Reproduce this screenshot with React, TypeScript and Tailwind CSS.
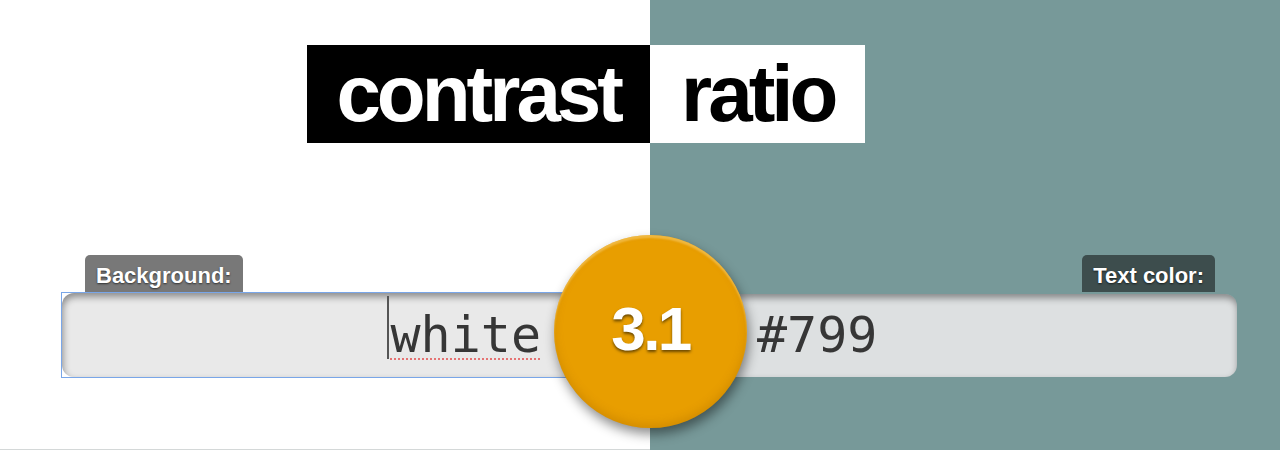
import React from "react";

const sans = "font-['Liberation_Sans',Arial,sans-serif]";
const mono = "font-['DejaVu_Sans_Mono','Liberation_Mono',monospace]";

const Label = ({ text, className }: { text: string; className: string }) => (
  <div
    className={`h-[37px] rounded-t-[5px] px-[11px] pt-[3px] flex items-center ${sans} text-[22px] font-bold text-white [text-shadow:0_1px_2px_rgba(0,0,0,0.6)] ${className}`}
  >
    {text}
  </div>
);

export default function App() {
  return (
    <div className="relative h-[450px] w-[1280px] overflow-hidden flex">
      {/* background side */}
      <div className="w-[650px] bg-white border-b border-[#d4d8d8] flex flex-col items-end pt-[45px]">
        <h1
          className={`h-[98px] bg-black text-white pl-[29px] pr-[30px] ${sans} font-bold text-[80px] leading-[98px] tracking-[-0.05em]`}
        >
          contrast
        </h1>
        <Label text="Background:" className="self-start ml-[85px] mt-[112px] bg-[#787878]" />
        <div className="self-start ml-[61px] w-[589px] h-[86px] border border-[#79a6e8]">
          <div className="h-full rounded-[12px] bg-[#e9e9e9] shadow-[inset_1px_4px_7px_rgba(0,0,0,0.4)] flex items-center justify-end pr-[108px]">
            <span className={`relative ${mono} text-[50px] text-[#363636] underline decoration-dotted decoration-[#e57373] decoration-2 underline-offset-[7px]`}>
              <span className="absolute left-[-3px] top-[-2px] h-[63px] w-[2px] bg-[#555]" />
              white
            </span>
          </div>
        </div>
      </div>

      {/* text color side */}
      <div className="flex-1 bg-[#799] flex flex-col items-start pt-[45px]">
        <h1
          className={`h-[98px] bg-white text-black px-[31px] ${sans} font-bold text-[80px] leading-[98px] tracking-[-0.05em]`}
        >
          ratio
        </h1>
        <Label text="Text color:" className="self-end mr-[65px] mt-[112px] bg-[#3d4d4d]" />
        <div className="w-[587px] h-[83px] mt-[2px] rounded-[12px] bg-[#dde0e1] shadow-[inset_1px_4px_7px_rgba(0,0,0,0.4)] flex items-center pl-[107px]">
          <span className={`${mono} text-[50px] text-[#363636]`}>#799</span>
        </div>
      </div>

      {/* ratio badge */}
      <div className="absolute left-[554px] top-[235px] w-[193px] h-[193px] rounded-full bg-[#e89e00] shadow-[2px_6px_12px_rgba(0,0,0,0.45),inset_0_3px_2px_rgba(255,220,140,0.45),inset_0_-4px_8px_rgba(150,90,0,0.25)] flex items-center justify-center pb-[5px]">
        <span
          className={`${sans} font-bold text-[62px] leading-none text-white tracking-[-0.04em] [text-shadow:0_2px_3px_rgba(0,0,0,0.55)]`}
        >
          3.1
        </span>
      </div>
    </div>
  );
}
